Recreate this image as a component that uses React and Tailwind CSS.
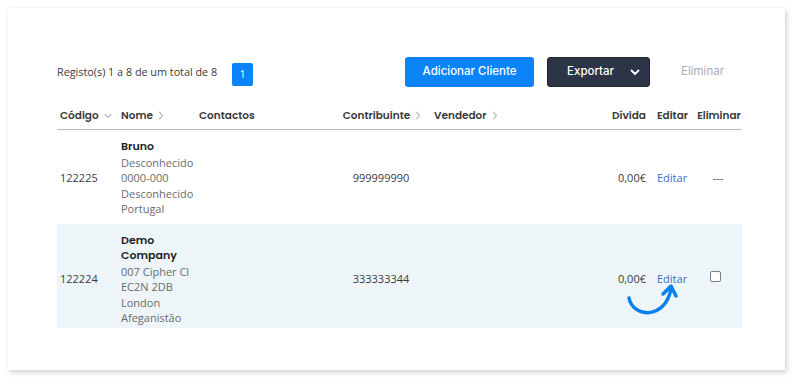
import React from "react";

const ChevDown = ({ className = "" }) => (
  <svg width="8" height="6" viewBox="0 0 8 6" className={className} fill="none">
    <path d="M1 1.5 L4 4.5 L7 1.5" stroke="#8a8f99" strokeWidth="1" strokeLinecap="round" strokeLinejoin="round" />
  </svg>
);
const ChevRight = ({ className = "" }) => (
  <svg width="6" height="9" viewBox="0 0 6 9" className={className} fill="none">
    <path d="M1.5 1 L4.5 4.5 L1.5 8" stroke="#8a8f99" strokeWidth="1" strokeLinecap="round" strokeLinejoin="round" />
  </svg>
);

const head = "font-['Poppins','Inter',sans-serif] font-semibold text-[10.5px] text-[#3a3a3a]";

export default function App() {
  return (
    <div className="w-[800px] h-[385px] bg-white p-[8px] font-['Open_Sans',sans-serif]">
      <div className="relative w-[777px] h-[362px] bg-white shadow-[2px_3px_5px_rgba(40,40,70,0.18),0_0_3px_rgba(0,0,0,0.05)] pt-[49px] px-[49px]">
        {/* toolbar */}
        <div className="flex items-center h-[30px] w-[685px]">
          <span className="text-[10.8px] text-[#3b3b3b] w-[175px]">Registo(s) 1 a 8 de um total de 8</span>
          <span className="w-[21px] h-[23px] mt-[5px] rounded-[2px] bg-[#0a84fa] text-white text-[10px] flex items-center justify-center">1</span>
          <button className="ml-auto h-[30px] w-[129px] rounded-[3px] bg-[#0b84f8] text-white text-[11.5px] font-['Inter',sans-serif] font-medium">
            Adicionar Cliente
          </button>
          <button className="ml-[13px] h-[30px] w-[103px] rounded-[3px] bg-[#2d3446] border border-[#1c2230] text-white text-[11.5px] font-['Inter',sans-serif] font-medium flex items-center pl-[19px]">
            Exportar
            <svg width="10" height="7" viewBox="0 0 10 7" className="ml-[16px]" fill="none">
              <path d="M1.5 1.5 L5 5 L8.5 1.5" stroke="white" strokeWidth="1.8" strokeLinecap="round" strokeLinejoin="round" />
            </svg>
          </button>
          <span className="ml-[31px] mr-[18px] text-[11.5px] text-[#a9aeb8] font-['Inter',sans-serif]">Eliminar</span>
        </div>

        {/* table */}
        <table className="table-fixed border-collapse w-[685px] mt-[16px]">
          <colgroup>
            <col className="w-[61px]" />
            <col className="w-[78px]" />
            <col className="w-[140px]" />
            <col className="w-[90px]" />
            <col className="w-[179px]" />
            <col className="w-[45px]" />
            <col className="w-[44px]" />
            <col className="w-[48px]" />
          </colgroup>
          <thead>
            <tr className={`h-[26px] border-b border-[#bdbdbd] ${head}`}>
              <th className="text-left pl-[3px] font-semibold">
                <span className="inline-flex items-center gap-[5px]">Código<ChevDown /></span>
              </th>
              <th className="text-left pl-[3px] font-semibold">
                <span className="inline-flex items-center gap-[5px]">Nome<ChevRight /></span>
              </th>
              <th className="text-left pl-[3px] font-semibold">Contactos</th>
              <th className="text-center pl-[2px] font-semibold">
                <span className="inline-flex items-center gap-[5px]">Contribuinte<ChevRight /></span>
              </th>
              <th className="text-left pl-[8px] font-semibold">
                <span className="inline-flex items-center gap-[5px]">Vendedor<ChevRight /></span>
              </th>
              <th className="text-right pr-[4px] font-semibold">Dívida</th>
              <th className="text-left pl-[7px] font-semibold">Editar</th>
              <th className="text-center pl-[2px] font-semibold">Eliminar</th>
            </tr>
          </thead>
          <tbody className="text-[11px] text-[#3b3b3b] leading-[15.5px]">
            <tr className="h-[95px] [&>td]:pt-[2px]">
              <td className="pl-[3px] align-middle">122225</td>
              <td className="pl-[3px] align-middle">
                <div className="font-['Poppins','Inter',sans-serif] font-semibold text-[11px] text-[#1e1e1e]">Bruno</div>
                <div className="text-[#6b6b6b]">Desconhecido</div>
                <div className="text-[#6b6b6b]">0000-000</div>
                <div className="text-[#6b6b6b]">Desconhecido</div>
                <div className="text-[#6b6b6b]">Portugal</div>
              </td>
              <td></td>
              <td className="text-center align-middle">999999990</td>
              <td></td>
              <td className="text-right pr-[4px] align-middle">0,00€</td>
              <td className="pl-[7px] align-middle text-[#3a6ec2]">Editar</td>
              <td className="text-center align-middle text-[#555]">---</td>
            </tr>
            <tr className="h-[104px] bg-[#edf5f9] [&>td]:pt-[6px]">
              <td className="pl-[3px] align-middle">122224</td>
              <td className="pl-[3px] align-middle">
                <div className="font-['Poppins','Inter',sans-serif] font-semibold text-[11px] text-[#1e1e1e] w-[70px]">Demo Company</div>
                <div className="text-[#6b6b6b]">007 Cipher Cl</div>
                <div className="text-[#6b6b6b]">EC2N 2DB</div>
                <div className="text-[#6b6b6b]">London</div>
                <div className="text-[#6b6b6b]">Afeganistão</div>
              </td>
              <td></td>
              <td className="text-center align-middle">333333344</td>
              <td></td>
              <td className="text-right pr-[4px] align-middle">0,00€</td>
              <td className="pl-[7px] align-middle text-[#3a6ec2]">Editar</td>
              <td className="text-center align-middle">
                <span className="inline-block align-middle w-[11px] h-[11px] rounded-[2px] border border-[#7d7d7d] bg-white mb-[6px] mr-[6px]"></span>
              </td>
            </tr>
          </tbody>
        </table>

        {/* annotation arrow */}
        <svg className="absolute left-[612px] top-[271px]" width="60" height="45" viewBox="0 0 60 45" fill="none">
          <path d="M9 19 C 13 39, 45 41, 51 10" stroke="#0a7ff0" strokeWidth="3.5" strokeLinecap="round" />
          <path d="M43 15 L51 7 L56 17" stroke="#0a7ff0" strokeWidth="3.5" strokeLinecap="round" strokeLinejoin="round" />
        </svg>
      </div>
    </div>
  );
}
